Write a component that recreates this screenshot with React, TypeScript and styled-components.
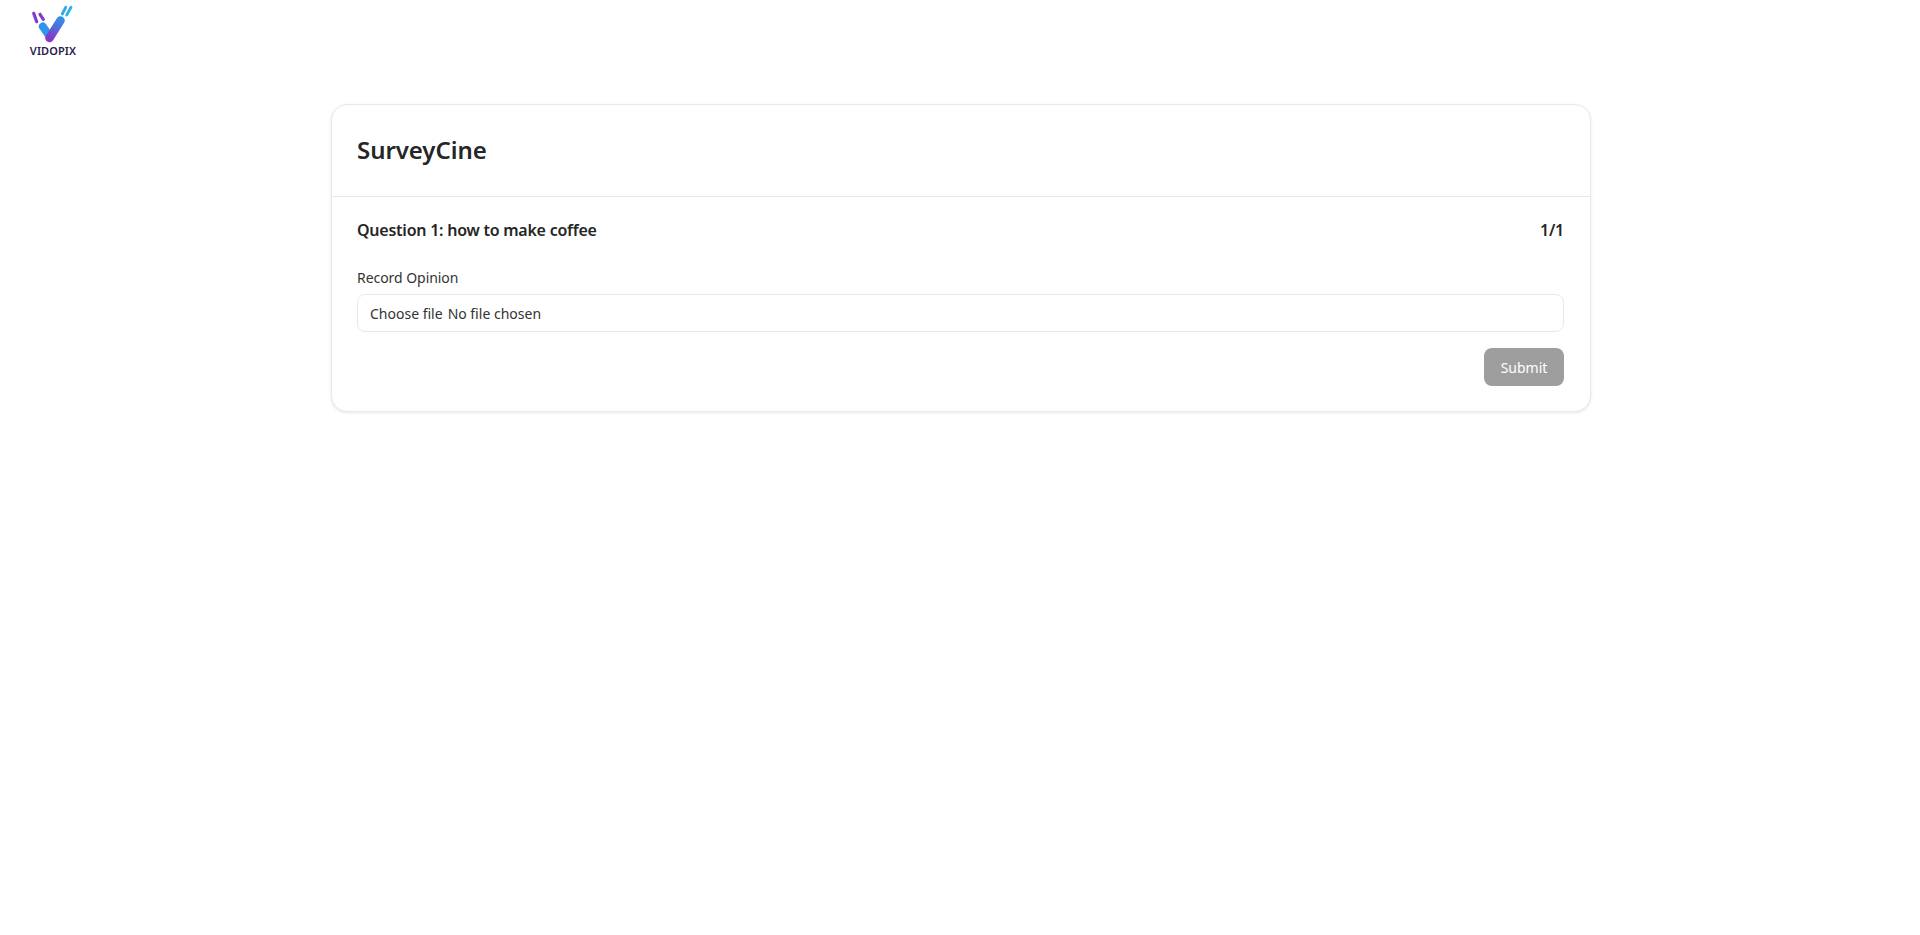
import React from "react";
import styled, { createGlobalStyle } from "styled-components";

const GlobalStyle = createGlobalStyle`
  html, body {
    margin: 0;
    padding: 0;
    background: #ffffff;
    font-family: "Noto Sans", sans-serif;
    color: #262626;
  }
`;

const Page = styled.div`
  min-height: 935px;
  display: flex;
  flex-direction: column;
`;

const Header = styled.header`
  height: 104px;
  padding: 5px 0 0 29px;
  box-sizing: border-box;
`;

const Logo = styled.div`
  width: 48px;
  display: flex;
  flex-direction: column;
  align-items: center;
`;

const LogoText = styled.span`
  font-size: 11px;
  line-height: 11px;
  font-weight: 600;
  letter-spacing: 0.1px;
  color: #2b1b4e;
  margin-top: 2px;
`;

const Card = styled.main`
  width: 1260px;
  margin-left: 331px;
  box-sizing: border-box;
  background: #fff;
  border: 1px solid #e9e9e9;
  border-radius: 16px;
  box-shadow: 0 1px 3px rgba(0, 0, 0, 0.1);
`;

const CardHeader = styled.div`
  height: 89px;
  padding: 0 26px 2px 25px;
  display: flex;
  align-items: center;
  border-bottom: 1px solid #e9e9e9;
`;

const Title = styled.h1`
  margin: 0;
  font-size: 24px;
  font-weight: 600;
  letter-spacing: -0.05px;
  color: #262626;
`;

const CardBody = styled.div`
  padding: 21px 26px 25px 25px;
`;

const QuestionRow = styled.div`
  display: flex;
  justify-content: space-between;
  align-items: center;
  font-size: 16px;
  line-height: 24px;
  font-weight: 600;
  letter-spacing: -0.24px;
  margin-bottom: 26px;
`;

const FieldLabel = styled.label`
  display: block;
  font-size: 14px;
  line-height: 20px;
  letter-spacing: -0.05px;
  color: #333;
  margin-bottom: 6px;
`;

const FileBox = styled.div`
  height: 38px;
  box-sizing: border-box;
  padding: 0 12px;
  display: flex;
  align-items: center;
  gap: 5px;
  font-size: 14px;
  color: #333;
  border: 1px solid #e9e9e9;
  border-radius: 8px;
`;

const Actions = styled.div`
  display: flex;
  justify-content: flex-end;
  margin-top: 16px;
`;

const SubmitButton = styled.button`
  width: 80px;
  height: 38px;
  border: none;
  border-radius: 8px;
  background: #9e9e9e;
  color: #fff;
  font-family: inherit;
  font-size: 14px;
`;

const LogoMark = () => (
  <svg width="48" height="38" viewBox="0 0 48 38" fill="none" strokeLinecap="round">
    <defs>
      <linearGradient id="stem" gradientUnits="userSpaceOnUse" x1="21" y1="34" x2="32" y2="14">
        <stop offset="0" stopColor="#8a35c9" />
        <stop offset="1" stopColor="#2f8fe8" />
      </linearGradient>
    </defs>
    <path d="M13.8 21.5 L19 29" stroke="#2d96ea" strokeWidth="8" />
    <path d="M20.5 33 L31.5 15.5" stroke="url(#stem)" strokeWidth="8.5" />
    <path d="M4.7 8.3 L7.7 16.7" stroke="#7f3cc8" strokeWidth="3.2" />
    <path d="M11 9.3 L14.3 14.3" stroke="#7f3cc8" strokeWidth="3.2" />
    <path d="M33.3 9 L36.7 2.3" stroke="#2fa6e8" strokeWidth="2.8" />
    <path d="M37.7 10 L42 2.3" stroke="#2fb2ea" strokeWidth="2.8" />
  </svg>
);

const App = () => (
  <Page>
    <GlobalStyle />
    <Header>
      <Logo>
        <LogoMark />
        <LogoText>VIDOPIX</LogoText>
      </Logo>
    </Header>
    <Card>
      <CardHeader>
        <Title>SurveyCine</Title>
      </CardHeader>
      <CardBody>
        <QuestionRow>
          <span>Question 1: how to make coffee</span>
          <span>1/1</span>
        </QuestionRow>
        <FieldLabel>Record Opinion</FieldLabel>
        <FileBox>
          <span>Choose file</span>
          <span>No file chosen</span>
        </FileBox>
        <Actions>
          <SubmitButton disabled>Submit</SubmitButton>
        </Actions>
      </CardBody>
    </Card>
  </Page>
);

export default App;
